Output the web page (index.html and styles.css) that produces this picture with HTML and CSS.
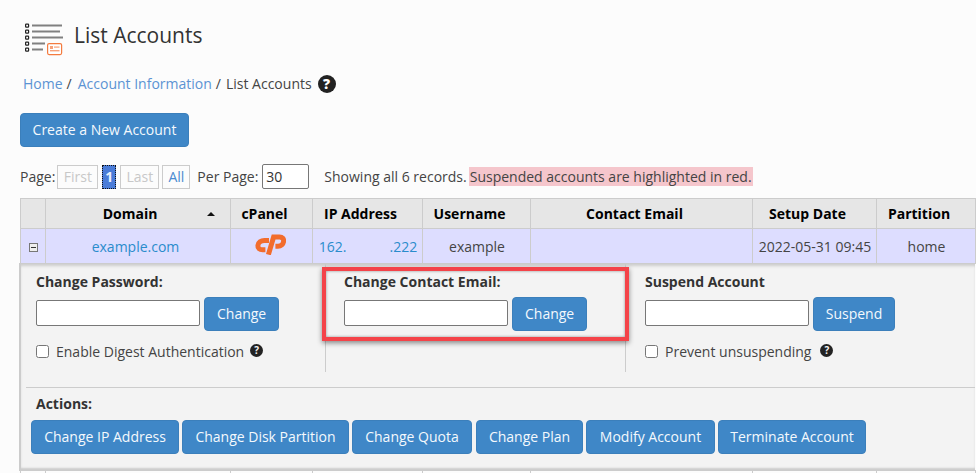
FILE: index.html
```html
<!DOCTYPE html>
<html lang="en">
<head>
    <meta charset="UTF-8">
    <meta name="viewport" content="width=device-width, initial-scale=1.0">
    <title>List Accounts</title>
    <link rel="stylesheet" href="styles.css">
</head>
<body>
    <div class="page-head">
        <svg class="head-icon" width="38" height="33" viewBox="0 0 38 33">
            <g fill="#fff" stroke="#222" stroke-width="1.2">
                <rect x="0.6" y="1.1" width="3" height="3" rx="0.6"/>
                <rect x="0.6" y="7.1" width="3" height="3" rx="0.6"/>
                <rect x="0.6" y="13.1" width="3" height="3" rx="0.6"/>
                <rect x="0.6" y="19.1" width="3" height="3" rx="0.6"/>
                <rect x="0.6" y="25.1" width="3" height="3" rx="0.6"/>
            </g>
            <g fill="#808080">
                <rect x="7" y="1.5" width="30" height="2"/>
                <rect x="7" y="7.5" width="28" height="2"/>
                <rect x="7" y="13.5" width="31" height="2"/>
                <rect x="7" y="19.5" width="13" height="2"/>
                <rect x="7" y="25.5" width="11" height="2"/>
            </g>
            <rect x="22.6" y="20.6" width="14" height="11" rx="1.5" fill="#fff" stroke="#f47b3f" stroke-width="1.2"/>
            <rect x="25" y="23" width="3" height="3" fill="#f7a27a"/>
            <rect x="29" y="23.5" width="5.5" height="1.2" fill="#f7a27a"/>
            <rect x="25" y="27" width="9.5" height="1.4" fill="#f7a27a"/>
        </svg>
        <h1>List Accounts</h1>
    </div>

    <div class="breadcrumb">
        <a href="#">Home</a><span class="sep">/</span>
        <a href="#">Account Information</a><span class="sep">/</span>
        <span class="crumb-now">List Accounts</span>
        <span class="help help-big">?</span>
    </div>

    <button class="btn btn-create">Create a New Account</button>

    <div class="pager">
        <span>Page:</span>
        <span class="page-box page-first off">First</span>
        <span class="page-box page-now">1</span>
        <span class="page-box page-last off">Last</span>
        <span class="page-box page-all">All</span>
        <span class="per-label">Per Page:</span>
        <input class="per-input" type="text" value="30">
        <span class="records">Showing all 6 records.</span>
        <span class="suspended-note">Suspended accounts are highlighted in red.</span>
    </div>

    <table class="accounts">
        <colgroup>
            <col class="c-toggle">
            <col class="c-domain">
            <col class="c-cpanel">
            <col class="c-ip">
            <col class="c-user">
            <col class="c-email">
            <col class="c-date">
            <col class="c-part">
        </colgroup>
        <thead>
            <tr>
                <th></th>
                <th class="th-domain">Domain<span class="caret"></span></th>
                <th>cPanel</th>
                <th>IP Address</th>
                <th>Username</th>
                <th>Contact Email</th>
                <th>Setup Date</th>
                <th>Partition</th>
            </tr>
        </thead>
        <tbody>
            <tr class="row-open">
                <td><span class="toggle"></span></td>
                <td class="domain-cell"><a href="#">example.com</a></td>
                <td class="cp-cell">
                    <svg class="cp-logo" width="31" height="21" viewBox="0 0 31 21">
                        <g fill="none" stroke="#f26c2d" stroke-width="5">
                            <path d="M14 6.4H9.4C6 6.4 3.2 8.4 2.9 11.4C2.6 14.2 4.6 15.8 7.6 15.8H10.4"/>
                            <path d="M13.4 20.6L18.6 3H24.6C27.4 3 28.9 4.8 28.6 7.4C28.3 10.2 26 12.2 23 12.2H20.4"/>
                        </g>
                    </svg>
                </td>
                <td class="ip"><a href="#">162.<span class="ip-gap"></span>.222</a></td>
                <td>example</td>
                <td></td>
                <td>2022-05-31 09:45</td>
                <td>home</td>
            </tr>
            <tr>
                <td class="panel-cell" colspan="8">
                    <div class="panel">
                        <div class="panel-cols">
                            <div class="panel-col col-pass">
                                <label class="field-title">Change Password:</label>
                                <div class="field-line">
                                    <input class="field" type="text">
                                    <button class="btn">Change</button>
                                </div>
                                <label class="check-line">
                                    <input type="checkbox">
                                    <span>Enable Digest Authentication</span>
                                    <span class="help">?</span>
                                </label>
                            </div>
                            <div class="panel-col col-mail">
                                <div class="callout"></div>
                                <label class="field-title">Change Contact Email:</label>
                                <div class="field-line">
                                    <input class="field" type="text">
                                    <button class="btn">Change</button>
                                </div>
                            </div>
                            <div class="panel-col col-susp">
                                <label class="field-title">Suspend Account</label>
                                <div class="field-line">
                                    <input class="field" type="text">
                                    <button class="btn btn-suspend">Suspend</button>
                                </div>
                                <label class="check-line">
                                    <input type="checkbox">
                                    <span>Prevent unsuspending</span>
                                    <span class="help help-gap">?</span>
                                </label>
                            </div>
                        </div>
                        <div class="actions">
                            <div class="actions-title">Actions:</div>
                            <div class="actions-btns">
                                <button class="btn act-ip">Change IP Address</button>
                                <button class="btn act-disk">Change Disk Partition</button>
                                <button class="btn act-quota">Change Quota</button>
                                <button class="btn act-plan">Change Plan</button>
                                <button class="btn act-modify">Modify Account</button>
                                <button class="btn act-term">Terminate Account</button>
                            </div>
                        </div>
                    </div>
                </td>
            </tr>
            <tr class="row-next">
                <td></td><td></td><td></td><td></td><td></td><td></td><td></td><td></td>
            </tr>
        </tbody>
    </table>
</body>
</html>
```

FILE: styles.css
```css
*{
    box-sizing: border-box;
}
html, body{
    margin: 0;
    height: 100%;
    overflow: hidden;
}
body{
    padding: 23px 0 0 20px;
    background-color: #fcfcfc;
    font-family: "Open Sans", sans-serif;
    font-size: 14px;
    line-height: 20px;
    color: #444;
}
a{
    color: #2a8ccc;
    text-decoration: none;
}

/* header */
.page-head{
    display: flex;
    align-items: flex-start;
    height: 33px;
    padding-left: 5px;
}
.head-icon{
    flex: none;
}
h1{
    margin: -3px 0 0 11px;
    font-size: 21px;
    line-height: 30px;
    font-weight: 400;
    color: #333;
}
.breadcrumb{
    display: flex;
    align-items: center;
    height: 20px;
    margin: 18px 0 0 3px;
}
.breadcrumb a{
    color: #5b93d3;
}
.sep{
    margin: 0 6px 0 4px;
}
.crumb-now{
    margin-left: -1px;
}
.help{
    display: inline-flex;
    align-items: center;
    justify-content: center;
    width: 13px;
    height: 13px;
    border-radius: 50%;
    background-color: #222;
    color: #f3f3f3;
    font-size: 10px;
    line-height: 13px;
    font-weight: 700;
}
.help-big{
    width: 18px;
    height: 18px;
    margin-left: 6px;
    font-size: 14px;
    line-height: 18px;
    font-weight: 800;
    color: #fff;
}
.btn{
    height: 34px;
    padding: 0 12px 2px 12px;
    border: 1px solid #3b7fbb;
    border-radius: 4px;
    background-color: #3f87c7;
    color: #f4f9fd;
    font-family: inherit;
    font-size: 14px;
    cursor: pointer;
}
.btn-create{
    display: block;
    width: 169px;
    margin-top: 19px;
    padding: 0 0 2px 0;
}
.btn-suspend{
    width: 82px;
    padding: 0 0 2px 0;
}

/* pager */
.pager{
    display: flex;
    align-items: center;
    height: 25px;
    margin-top: 17px;
}
.page-box{
    height: 24px;
    border: 1px solid #ccc;
    text-align: center;
    line-height: 22px;
    color: #4a8bd0;
}
.page-box.off{
    color: #c8c8c8;
}
.page-first{
    width: 41px;
    margin-left: 2px;
}
.page-now{
    width: 14px;
    margin-left: 4px;
    border: 1px dotted #111;
    background-color: #4a7cd8;
    color: #e8f0fc;
    font-weight: 700;
}
.page-last{
    width: 39px;
    margin-left: 4px;
}
.page-all{
    width: 28px;
    margin-left: 3px;
}
.per-label{
    margin-left: 7px;
}
.per-input{
    width: 47px;
    height: 25px;
    margin-left: 4px;
    padding: 0 3px;
    border: 1px solid #777;
    border-radius: 2px;
    background-color: #fff;
    font-family: inherit;
    font-size: 14px;
    color: #333;
}
.records{
    margin-left: 15px;
}
.suspended-note{
    margin-left: 2px;
    padding: 0 1px;
    height: 19px;
    line-height: 19px;
    background-color: #f5c6cc;
}

/* table */
.accounts{
    width: 955px;
    margin: 9px 0 0 -1px;
    table-layout: fixed;
    border-collapse: collapse;
}
.c-toggle{ width: 25px; }
.c-domain{ width: 185px; }
.c-cpanel{ width: 82px; }
.c-ip{ width: 110px; }
.c-user{ width: 108px; }
.c-email{ width: 222px; }
.c-date{ width: 124px; }
.c-part{ width: 99px; }
th, td{
    padding: 0;
    border: 1px solid #ccc;
    text-align: center;
}
th{
    height: 30px;
    padding-right: 13px;
    background-color: #e6e6e6;
    color: #000;
    font-weight: 700;
}
.th-domain{
    position: relative;
    padding-right: 15px;
}
.caret{
    position: absolute;
    top: 13px;
    right: 15px;
    border-left: 4px solid transparent;
    border-right: 4px solid transparent;
    border-bottom: 4px solid #111;
}
.row-open td{
    height: 35px;
    padding: 1px 0 0 2px;
    background-color: #ddf;
}
.row-open .domain-cell{
    padding-right: 6px;
}
.row-open .cp-cell{
    padding-right: 4px;
}
.toggle{
    display: inline-block;
    position: relative;
    width: 9px;
    height: 9px;
    margin-top: 6px;
    border: 1px solid #777;
    background-color: #eee;
}
.toggle::after{
    content: "";
    position: absolute;
    left: 1px;
    right: 1px;
    top: 3px;
    height: 1px;
    background-color: #333;
}
.cp-logo{
    display: block;
    margin: -5px auto 0 auto;
}
.ip-gap{
    display: inline-block;
    width: 43px;
}
.row-next td{
    height: 12px;
    background-color: #fcfcfc;
}

/* expanded row */
.panel-cell{
    padding: 0;
    text-align: left;
    border-left: 2px solid #ccc;
    border-right: none;
}
.panel{
    height: 206px;
    padding: 0 0 0 5px;
    background-color: #f3f3f3;
    box-shadow: inset 0 3px 3px -1px #ccc, inset 0 -3px 2px -1px #ccc;
}
.panel-cols{
    display: flex;
    height: 108px;
}
.panel-col{
    position: relative;
    padding-top: 8px;
}
.col-pass{
    width: 299px;
    padding-left: 10px;
}
.col-mail{
    width: 301px;
    padding-left: 18px;
    border-left: 1px solid #ccc;
    border-right: 1px solid #ccc;
}
.col-susp{
    padding-left: 19px;
}
.callout{
    position: absolute;
    left: -4px;
    top: 3px;
    width: 307px;
    height: 74px;
    border: 4px solid #f44349;
    box-shadow: 0 2px 5px rgba(0, 0, 0, 0.45), inset 0 0 3px rgba(0, 0, 0, 0.4);
}
.field-title{
    display: block;
    font-weight: 700;
    color: #333;
}
.field-line{
    display: flex;
    align-items: center;
    gap: 4px;
    margin-top: 5px;
}
.field{
    width: 164px;
    height: 26px;
    margin-bottom: 2px;
    padding: 0 4px;
    border: 1px solid #777;
    border-radius: 2px;
    background-color: #fff;
}
.check-line{
    display: flex;
    align-items: center;
    margin-top: 11px;
    color: #444;
}
.check-line input{
    width: 13px;
    height: 13px;
    margin: -2px 7px 0 0;
}
.check-line .help{
    margin-left: 6px;
    margin-top: -4px;
}
.check-line .help-gap{
    margin-left: 9px;
}
.actions{
    margin-top: 15px;
    border-top: 1px solid #ccc;
    padding: 6px 0 0 5px;
}
.actions-title{
    padding-left: 5px;
    font-weight: 700;
    color: #333;
}
.actions-btns{
    display: flex;
    gap: 3px;
    margin-top: 6px;
}
.actions-btns .btn{
    padding: 0 0 2px 0;
}
.act-ip{ width: 148px; }
.act-disk{ width: 167px; }
.act-quota{ width: 120px; }
.act-plan{ width: 107px; margin-left: 1px; }
.act-modify{ width: 129px; }
.act-term{ width: 148px; }
```
